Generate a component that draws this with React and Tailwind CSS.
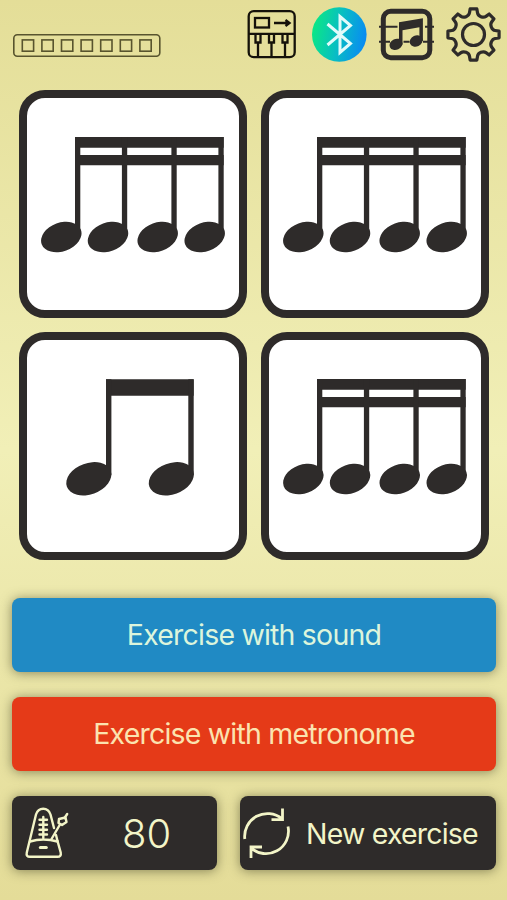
const INK = "#2e2b2a";
const CREAM = "#f3f5c8";

function LedStrip() {
  return (
    <svg className="mt-[27px] h-[24px] w-[148px]" viewBox="0 0 148 24" fill="none" stroke="#58542e" strokeWidth="1.600">
      <rect x="0.800" y="0.800" width="146" height="21.500" rx="3.500" />
      {[0, 1, 2, 3, 4, 5, 6].map((i) => (
        <rect key={i} x={9.3 + i * 19.6} y="5.900" width="11.300" height="11.300" />
      ))}
    </svg>
  );
}

function KeyboardIcon() {
  return (
    <svg className="size-[55px]" viewBox="0 0 55 55" fill="none" stroke="#15120a" strokeWidth="2.3">
      <rect x="3.7" y="4.2" width="46" height="46" rx="5" />
      <rect x="10" y="11" width="14" height="9.5" />
      <path d="M29 16h15M40.500 13l4 3-4 3M3.700 26.800h46" />
      <path d="M10.500 27v8.500h5V27M24 27v8.500h5V27M37.500 27v8.500h5V27M13 36v14M26.500 36v14M40 36v14" />
    </svg>
  );
}

function BluetoothIcon() {
  return (
    <svg className="size-[55px]" viewBox="0 0 55 55">
      <defs>
        <linearGradient id="bt" x1="0" y1="0.4" x2="1" y2="0.6">
          <stop offset="0" stopColor="#0be884" />
          <stop offset="0.5" stopColor="#08bdc4" />
          <stop offset="1" stopColor="#0989f4" />
        </linearGradient>
      </defs>
      <circle cx="27.300" cy="27.500" r="27.300" fill="url(#bt)" />
      <path
        d="M15.500 17L38.500 36.500 28 45.500V9.500L38.500 18.500 15.500 38"
        fill="none"
        stroke="#e2fbfa"
        strokeWidth="3"
        strokeLinejoin="miter"
      />
    </svg>
  );
}

function MusicIcon() {
  return (
    <svg className="size-[55px]" viewBox="0 0 55 55" fill="none" stroke={INK}>
      <rect x="4.300" y="4.300" width="46.500" height="46.500" rx="7.500" strokeWidth="5" />
      <path d="M0 19.700h18.500M46 19.700h9M0 34.700h11M24.500 34.700h6M44 34.700h11" strokeWidth="2" />
      <path d="M20 15.300L43.900 11.200V34h-3.500V20.300L23.500 23.300v14.200H20z" fill={INK} stroke="none" />
      <ellipse cx="17" cy="37.300" rx="6.700" ry="5.400" transform="rotate(-25 17 37.300)" fill={INK} stroke="none" />
      <ellipse cx="37.200" cy="34" rx="6.700" ry="5.400" transform="rotate(-25 37.200 34)" fill={INK} stroke="none" />
    </svg>
  );
}

// Outline of an eight-toothed gear centred on (27.5, 27.5).
function gearPath() {
  const pt = (deg, r) => {
    const a = (deg * Math.PI) / 180;
    return `${(27.5 + r * Math.sin(a)).toFixed(2)} ${(27.5 - r * Math.cos(a)).toFixed(2)}`;
  };
  let d = `M${pt(-7.5, 25.8)}`;
  for (let i = 0; i < 8; i++) {
    const a = i * 45;
    d += `L${pt(a + 7.5, 25.8)}L${pt(a + 10.5, 22)}C${pt(a + 14, 18.8)} ${pt(a + 31, 18.8)} ${pt(a + 34.5, 22)}L${pt(a + 37.5, 25.8)}`;
  }
  return d + "Z";
}

function GearIcon() {
  return (
    <svg className="size-[55px]" viewBox="0 0 55 55" fill="none" stroke={INK} strokeWidth="3.200" strokeLinejoin="round">
      <path d={gearPath()} />
      <circle cx="27.500" cy="27.500" r="11" />
    </svg>
  );
}

function Sixteenths() {
  return (
    <>
      <path d="M56 47H204.700V57.700H56zM56 65H204.700V75.300H56z" />
      {[56, 102.9, 152.4, 199.4].map((x) => (
        <rect key={x} x={x} y="47" width="5.300" height="96" />
      ))}
      {[42.3, 89, 138.7, 185.700].map((x) => (
        <ellipse key={x} cx={x} cy="147" rx="20.900" ry="14.300" transform={`rotate(-20 ${x} 147)`} />
      ))}
    </>
  );
}

function Eighths() {
  return (
    <>
      <path d="M87 47.300H174.700V63.700H87z" />
      {[87, 169.3].map((x) => (
        <rect key={x} x={x} y="47.300" width="5.400" height="96" />
      ))}
      {[69.8, 152.3].map((x) => (
        <ellipse key={x} cx={x} cy="146.800" rx="23.300" ry="15.600" transform={`rotate(-20 ${x} 146.800)`} />
      ))}
    </>
  );
}

function Card({ children }) {
  return (
    <div className="size-[228px] rounded-[26px] border-8 border-[#2e2b2a] bg-white">
      <svg className="-m-[8px] size-[228px]" viewBox="0 0 228 228" fill={INK}>
        {children}
      </svg>
    </div>
  );
}

function MetronomeIcon() {
  return (
    <svg className="h-[56px] w-[46px]" viewBox="0 0 46 56" fill="none" stroke={CREAM} strokeWidth="2.400" strokeLinecap="round" strokeLinejoin="round">
      <path d="M32.500 36l3.200 11.500q.8 4.200-3.200 4.200H5q-4.200 0-3.200-4.200L11 9.500q1.800-5.800 7.200-5.800T25.500 9.500L29 23" />
      <path d="M5 36.500q13-4 27.500 0M32.500 36l-1.500-6M18.300 12v21M14.500 14.700h7.500M14.500 19.700h7.500M14.500 24.700h7.500M14.500 29.500h7.500" />
      <path d="M15.300 42.500h6" strokeWidth="3" />
      <path d="M26.500 34L35 19.500M39.500 13l2.700-4" />
      <path d="M34 14l6.500-1.500 1 4.500-4.500 3-3.500-2z" />
    </svg>
  );
}

function RefreshIcon() {
  return (
    <svg className="size-[54px]" viewBox="0 0 54 54" fill="none" stroke={CREAM} strokeWidth="2.800">
      <path d="M4.800 33A22.800 22.800 0 0 1 42 12.800M42.500 2.500V13.600H31.500" />
      <path d="M48 20.500A22.500 22.500 0 0 1 10.500 41.500M11 52V41H22" />
    </svg>
  );
}

const button =
  "flex h-[74px] items-center rounded-[8px] shadow-[0_1px_12px_rgba(70,70,40,0.6)]";

export default function App() {
  return (
    <main className="flex h-[900px] w-[507px] flex-col overflow-hidden bg-linear-to-b from-[#e4de98] via-[#f1efb7] to-[#e4dc98] font-['Inter','Liberation_Sans',sans-serif] text-[#f3f5c8]">
      <header className="flex h-[90px] items-start justify-between pt-[7px] pr-[6px] pl-[13px]">
        <LedStrip />
        <div className="flex gap-3">
          <KeyboardIcon />
          <BluetoothIcon />
          <MusicIcon />
          <GearIcon />
        </div>
      </header>
      <section className="grid grid-cols-[228px_228px] gap-[14px] pl-[19px]">
        <Card><Sixteenths /></Card>
        <Card><Sixteenths /></Card>
        <Card><Eighths /></Card>
        <Card><Sixteenths /></Card>
      </section>
      <section className="flex flex-col gap-[25px] pr-[11px] pl-[12px] pt-[38px] text-[28.5px] font-normal tracking-[-0.8px]">
        <button className={`${button} justify-center bg-[#208ac4] pt-px text-[#dcf5dc]`}>
          <span>Exercise with sound</span>
        </button>
        <button className={`${button} justify-center bg-[#e53a18] pt-px text-[#fbe3b0]`}>
          <span>Exercise with metronome</span>
        </button>
        <div className="flex justify-between">
          <button className={`${button} w-[205px] bg-[#2e2b2a] pl-[13px]`}>
            <MetronomeIcon />
            <span className="ml-[51px] pt-[2px] text-[40px] font-light tracking-[0px]">80</span>
          </button>
          <button className={`${button} w-[256px] bg-[#2e2b2a]`}>
            <RefreshIcon />
            <span className="ml-[12px] pt-[2px] whitespace-nowrap">New exercise</span>
          </button>
        </div>
      </section>
    </main>
  );
}
